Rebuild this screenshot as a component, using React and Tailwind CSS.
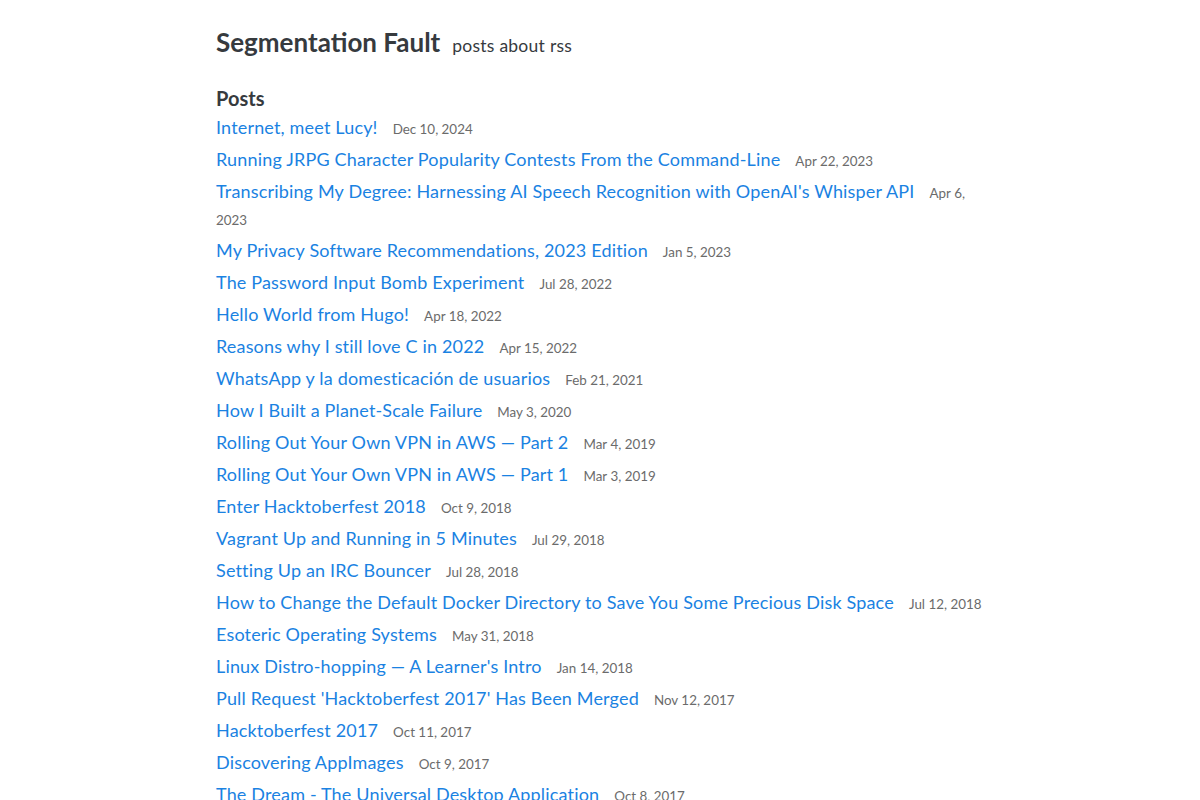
import React from 'react'

const posts = [
  ['Internet, meet Lucy!', 'Dec 10, 2024'],
  ['Running JRPG Character Popularity Contests From the Command-Line', 'Apr 22, 2023'],
  ["Transcribing My Degree: Harnessing AI Speech Recognition with OpenAI's Whisper API", 'Apr 6, 2023'],
  ['My Privacy Software Recommendations, 2023 Edition', 'Jan 5, 2023'],
  ['The Password Input Bomb Experiment', 'Jul 28, 2022'],
  ['Hello World from Hugo!', 'Apr 18, 2022'],
  ['Reasons why I still love C in 2022', 'Apr 15, 2022'],
  ['WhatsApp y la domesticación de usuarios', 'Feb 21, 2021'],
  ['How I Built a Planet-Scale Failure', 'May 3, 2020'],
  ['Rolling Out Your Own VPN in AWS — Part 2', 'Mar 4, 2019'],
  ['Rolling Out Your Own VPN in AWS — Part 1', 'Mar 3, 2019'],
  ['Enter Hacktoberfest 2018', 'Oct 9, 2018'],
  ['Vagrant Up and Running in 5 Minutes', 'Jul 29, 2018'],
  ['Setting Up an IRC Bouncer', 'Jul 28, 2018'],
  ['How to Change the Default Docker Directory to Save You Some Precious Disk Space', 'Jul 12, 2018'],
  ['Esoteric Operating Systems', 'May 31, 2018'],
  ["Linux Distro-hopping — A Learner's Intro", 'Jan 14, 2018'],
  ["Pull Request 'Hacktoberfest 2017' Has Been Merged", 'Nov 12, 2017'],
  ['Hacktoberfest 2017', 'Oct 11, 2017'],
  ['Discovering AppImages', 'Oct 9, 2017'],
  ['The Dream - The Universal Desktop Application', 'Oct 8, 2017'],
  ['Hello, World!', 'Oct 1, 2017'],
]

export default function App() {
  return (
    <div className="min-h-screen bg-white font-['Lato',sans-serif] text-[#363a3e]">
      <div className="mx-auto max-w-[768px] pt-[22px]">
        <header className="flex items-baseline gap-[12px]">
          <a href="#" className="text-[26px] font-bold leading-[40px]">Segmentation Fault</a>
          <nav className="flex gap-[5px] text-[17.5px] tracking-[0.2px]">
            <a href="#">posts</a>
            <a href="#">about</a>
            <a href="#">rss</a>
          </nav>
        </header>

        <main className="mt-[22px]">
          <h2 className="text-[20px] font-bold leading-[28px]">Posts</h2>
          <ul className="mt-[2px]">
            {posts.map(([title, date]) => (
              <li key={title} className="mb-[5px] text-[18px] leading-[27px]">
                <a href="#" className="tracking-[0.17px] text-[#1a82e2]">{title}</a>
                <span className="ml-[15px] text-[13.4px] leading-none text-[#6b6b6b]">{date}</span>
              </li>
            ))}
          </ul>
        </main>
      </div>
    </div>
  )
}
